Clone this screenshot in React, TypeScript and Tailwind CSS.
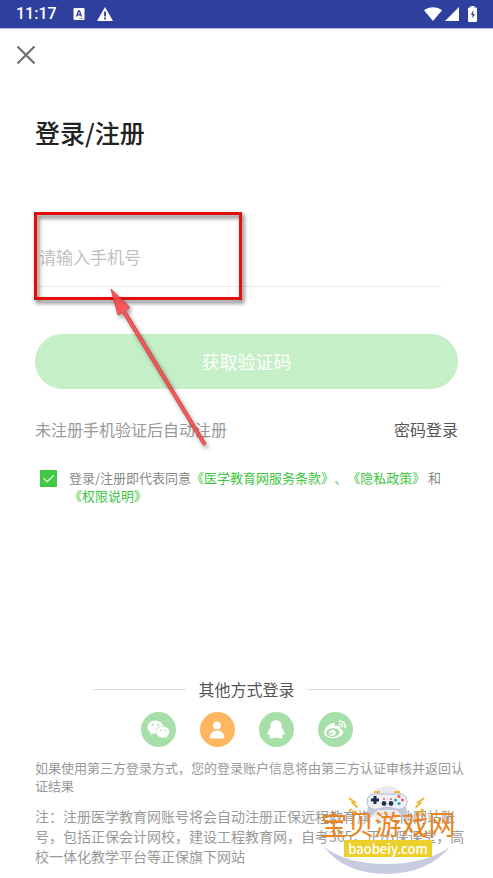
import { FaWeibo, FaWeixin } from "react-icons/fa";

function StatusBar() {
  return (
    <div className="flex h-[29px] items-center border-b border-[#b0b5e2] bg-[#2e3f9e] pl-4 pr-4 text-white">
      <span className="font-['Roboto',sans-serif] text-base font-medium leading-7">11:17</span>
      <svg className="ml-4 size-3" viewBox="0 0 12 12" aria-hidden="true">
        <rect x="0.5" width="11" height="12" rx="1" fill="currentColor" />
        <path d="M3.6 8.5 5.5 3h1l1.9 5.5M4.4 6.8h3.2" fill="none" stroke="#2e3f9e" strokeWidth="1.3" />
        <path d="M6.5 10.3h1M8.5 10.3h1" stroke="#2e3f9e" strokeWidth="1" />
      </svg>
      <svg className="ml-3 h-[14px] w-4" viewBox="0 0 16 14" aria-hidden="true">
        <path d="M8 0 16 14H0Z" fill="currentColor" />
        <path d="M8 4.5v5M8 10.6v1.8" stroke="#2e3f9e" strokeWidth="1.8" />
      </svg>
      <div className="ml-auto flex items-center">
        <svg className="h-[14px] w-[18px]" viewBox="0 0 18 14" aria-hidden="true">
          <path d="M0 3.2C5-.9 13-.9 18 3.2L9 14Z" fill="currentColor" />
        </svg>
        <svg className="ml-[3px] size-[14px]" viewBox="0 0 14 14" aria-hidden="true">
          <path d="M14 0v14H0Z" fill="currentColor" />
        </svg>
        <svg className="ml-[9px] h-4 w-[9px]" viewBox="0 0 9 16" aria-hidden="true">
          <path d="M2.5 0h4v1.6H8q1 0 1 1V15q0 1-1 1H1q-1 0-1-1V2.6q0-1 1-1h1.5Z" fill="currentColor" />
          <path d="M5.4 4.2 2.8 8.8h1.7v3.8l2.4-4.6H5.2Z" fill="#2e3f9e" />
        </svg>
      </div>
    </div>
  );
}

function PersonIcon() {
  return (
    <svg className="size-[18px]" viewBox="0 0 18 18" fill="currentColor" aria-hidden="true">
      <circle cx="9" cy="4.4" r="3.9" />
      <path d="M1.8 17.5v-1.2C1.8 12.4 5 9.5 9 9.5s7.2 2.9 7.2 6.8v1.2Z" />
    </svg>
  );
}

function PenguinIcon() {
  return (
    <svg className="h-[19px] w-[18px]" viewBox="0 0 18 19" fill="currentColor" aria-hidden="true">
      <path d="M9 .3c3.4 0 5.7 2.3 5.7 5.6v2.1c1.5 1.9 2.9 4 2.8 6.1-.1 1-.8.9-1.5-.2-.2 1-.6 1.6-1.2 2.2 1 .4 1.2 1 .9 1.6-.5.9-4.4.9-5.6-.2H7.9c-1.2 1.1-5.1 1.1-5.6.2-.3-.6-.1-1.2.9-1.6-.6-.6-1-1.2-1.2-2.2-.7 1.1-1.4 1.2-1.5.2C.4 12 1.8 9.9 3.3 8V5.9C3.3 2.6 5.6.3 9 .3Z" />
    </svg>
  );
}

const providers = [
  { name: "微信", color: "bg-[#a6dfa8]", icon: <FaWeixin size={23} /> },
  { name: "账号", color: "bg-[#ffb661]", icon: <PersonIcon /> },
  { name: "QQ", color: "bg-[#a6dfa8]", icon: <PenguinIcon /> },
  { name: "微博", color: "bg-[#a6dfa8]", icon: <FaWeibo size={22} /> },
];

function Watermark() {
  return (
    <div className="pointer-events-none absolute bottom-1 right-9 flex w-[138px] flex-col items-center">
      <svg className="absolute inset-x-0 bottom-0 h-[90px] w-full" viewBox="0 0 138 90" aria-hidden="true">
        <path d="M5 63Q28 80 67 80T131 63Q108 90 67 90T5 63Z" fill="#c8cce0" />
        <circle cx="68" cy="20" r="18" fill="#ebebed" />
        <path d="M47 37C48 25 50 13 55 11h26c5 2 7 14 8 26-4 0-7-8-12-11H59c-5 3-8 11-12 11Z" fill="#c3c8dc" />
        <path d="M48 17q1-7 8-7h24q7 0 8 7c0 7-5 9-11 8-6-2-12-2-18 0-6 1-11-1-11-8Z" fill="#eff0f6" stroke="#b3b9d0" strokeWidth="1" />
        <path d="M55 8h6M75 8h6" stroke="#efbb33" strokeWidth="2" />
        <path d="M56 12v8M52 16h8" stroke="#1d2f45" strokeWidth="3" />
        <circle cx="80" cy="12.5" r="1.6" fill="#ed5960" />
        <circle cx="76.5" cy="16" r="1.6" fill="#2ba8bb" />
        <circle cx="83.5" cy="16" r="1.6" fill="#ed5960" />
        <circle cx="80" cy="19.5" r="1.6" fill="#2ba8bb" />
        <circle cx="65" cy="19.5" r="2.4" fill="#22384c" />
        <circle cx="72" cy="19.5" r="2.4" fill="#22384c" />
        <path d="M64 15h2M71 15h2" stroke="#ee5560" strokeWidth="1.5" />
        <path d="m30 14 6 4.5-2.5.5 5 4.5M30 27l3-2M33 27.5l5 1M105 14l-6 4.5 2.5.5-5 4.5M105 27l-3-2M102 27.5l-5 1" fill="none" stroke="#f0b22d" strokeWidth="1.8" />
      </svg>
      <span className="relative mt-6 whitespace-nowrap text-[27px] leading-8 text-[#ea8420]">
        宝贝游戏网
      </span>
      <span className="relative mb-[17px] bg-[#edcf2b] px-1 text-[13px] font-medium leading-[17px] text-white">
        baobeiy.com
      </span>
    </div>
  );
}

export default function App() {
  return (
    <div className="relative flex min-h-screen flex-col bg-white font-['Noto_Sans_CJK_SC',sans-serif] [text-spacing-trim:space-all]">
      <StatusBar />

      <header className="px-4 pt-4">
        <button type="button" aria-label="关闭" className="flex size-5 items-center justify-center text-[#707070]">
          <svg className="size-5" viewBox="0 0 20 20" fill="none" stroke="currentColor" strokeWidth="2.2" aria-hidden="true">
            <path d="m1.5 1.5 17 17M18.5 1.5l-17 17" />
          </svg>
        </button>
      </header>

      <form className="relative px-[35px] pt-[49px]">
        <h1 className="text-[25px] font-medium leading-9 text-[#222]">登录/注册</h1>

        <div className="relative mr-[17px] mt-[77px]">
          <input
            type="tel"
            aria-label="手机号"
            placeholder="请输入手机号"
            className="block h-[60px] w-full border-b border-[#ebebeb] pl-1 text-[17px] outline-none placeholder:text-[#bfbfbf]"
          />
          {/* highlight box over the phone field */}
          <div className="pointer-events-none absolute -left-px -top-[15px] h-[88px] w-52 border-3 border-[#e20d0d] drop-shadow-[2px_3px_2px_rgba(0,0,0,0.6)]" />
          <svg
            className="pointer-events-none absolute left-[70px] top-[56px] h-[170px] w-[110px] opacity-90 drop-shadow-[2px_3px_2px_rgba(0,0,0,0.4)]"
            viewBox="0 0 110 170"
            aria-hidden="true"
          >
            <path d="M6 6 25 24.5 20.5 27.5 101 160.5 98.5 162.5 17.5 29.5 13 32Z" fill="#f54848" stroke="#cf3a3a" strokeWidth="1" />
          </svg>
        </div>

        <button
          type="button"
          className="mt-[47px] block h-[55px] w-full rounded-full bg-[#c5efc6] pb-[2px] text-lg text-white"
        >
          获取验证码
        </button>

        <div className="mt-7 flex items-center justify-between text-base leading-6">
          <span className="text-[#999]">未注册手机验证后自动注册</span>
          <a href="#password" className="text-[#555]">密码登录</a>
        </div>

        <div className="mt-7 flex items-start gap-3 pl-[5px]">
          <span className="mt-px grid size-[17px] shrink-0">
            <input
              id="agree"
              type="checkbox"
              defaultChecked
              className="col-start-1 row-start-1 size-[17px] appearance-none bg-[#41c944]"
            />
            <svg className="pointer-events-none col-start-1 row-start-1 size-[17px]" viewBox="0 0 17 17" fill="none" stroke="#d9f6d9" strokeWidth="1.3" aria-hidden="true">
              <path d="m3.5 8.3 3.6 3.5 6.8-6.6" />
            </svg>
          </span>
          <label htmlFor="agree" className="text-[13px] leading-[18px] text-[#888]">
            登录/注册即代表同意
            <a href="#terms" className="text-[#3cc540]">《医学教育网服务条款》</a>
            <span className="text-[#3cc540]">、</span>
            <a href="#privacy" className="text-[#3cc540]">《隐私政策》</a> 和
            <a href="#permissions" className="block text-[#3cc540]">《权限说明》</a>
          </label>
        </div>
      </form>

      <footer className="mt-auto pb-3 pl-[35px] pr-7 pt-8">
        <div className="mr-[7px] flex items-center justify-center gap-3">
          <span className="h-px w-[93px] bg-[#ddd]" />
          <h2 className="text-base leading-6 text-[#555]">其他方式登录</h2>
          <span className="h-px w-[93px] bg-[#ddd]" />
        </div>

        <div className="mr-[7px] mt-[11px] flex justify-center gap-6">
          {providers.map((p) => (
            <button
              key={p.name}
              type="button"
              aria-label={p.name}
              className={`flex size-[35px] items-center justify-center rounded-full text-white ${p.color}`}
            >
              {p.icon}
            </button>
          ))}
        </div>

        <p className="mt-3 text-[13px] leading-[18px] text-[#999]">
          如果使用第三方登录方式，您的登录账户信息将由第三方认证审核并返回认证结果
        </p>
        <p className="mt-[11px] text-sm leading-5 text-[#999]">
          注：注册医学教育网账号将会自动注册正保远程教育旗下其他网站账号，包括正保会计网校，建设工程教育网，自考365，正小保课堂，高校一体化教学平台等正保旗下网站
        </p>
      </footer>

      <Watermark />
    </div>
  );
}
